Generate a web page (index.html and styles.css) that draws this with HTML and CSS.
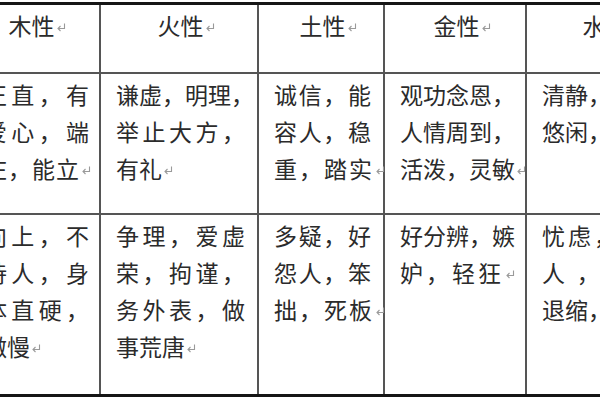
FILE: index.html
```html
<!DOCTYPE html>
<html lang="zh-CN">
<head>
<meta charset="utf-8">
<title>五行性格</title>
<link rel="stylesheet" href="styles.css">
</head>
<body>
<div class="page">
  <div class="tbl">
    <div class="c h c1">木性<svg class="pm" viewBox="0 0 10 10"><path d="M8.5 1.5V6.5H2M4.5 4L2 6.5L4.5 9"/></svg></div>
    <div class="c h">火性<svg class="pm" viewBox="0 0 10 10"><path d="M8.5 1.5V6.5H2M4.5 4L2 6.5L4.5 9"/></svg></div>
    <div class="c h">土性<svg class="pm" viewBox="0 0 10 10"><path d="M8.5 1.5V6.5H2M4.5 4L2 6.5L4.5 9"/></svg></div>
    <div class="c h">金性<svg class="pm" viewBox="0 0 10 10"><path d="M8.5 1.5V6.5H2M4.5 4L2 6.5L4.5 9"/></svg></div>
    <div class="c h">水性<svg class="pm" viewBox="0 0 10 10"><path d="M8.5 1.5V6.5H2M4.5 4L2 6.5L4.5 9"/></svg></div>

    <div class="c r1 c1">
      <div class="ln j">正直，有</div>
      <div class="ln j">爱心，端</div>
      <div class="ln ls1">庄，能立<svg class="pm" viewBox="0 0 10 10"><path d="M8.5 1.5V6.5H2M4.5 4L2 6.5L4.5 9"/></svg></div>
    </div>
    <div class="c r1">
      <div class="ln">谦虚，明理，</div>
      <div class="ln j">举止大方，</div>
      <div class="ln">有礼<svg class="pm" viewBox="0 0 10 10"><path d="M8.5 1.5V6.5H2M4.5 4L2 6.5L4.5 9"/></svg></div>
    </div>
    <div class="c r1">
      <div class="ln j">诚信，能</div>
      <div class="ln j">容人，稳</div>
      <div class="ln ls2">重，踏实<svg class="pm" viewBox="0 0 10 10"><path d="M8.5 1.5V6.5H2M4.5 4L2 6.5L4.5 9"/></svg></div>
    </div>
    <div class="c r1">
      <div class="ln">观功念恩，</div>
      <div class="ln">人情周到，</div>
      <div class="ln">活泼，灵敏<svg class="pm" viewBox="0 0 10 10"><path d="M8.5 1.5V6.5H2M4.5 4L2 6.5L4.5 9"/></svg></div>
    </div>
    <div class="c r1">
      <div class="ln">清静，聪明，</div>
      <div class="ln">悠闲，机智，</div>
    </div>

    <div class="c r2 c1">
      <div class="ln j">向上，不</div>
      <div class="ln j">待人，身</div>
      <div class="ln j">体直硬，</div>
      <div class="ln">傲慢<svg class="pm" viewBox="0 0 10 10"><path d="M8.5 1.5V6.5H2M4.5 4L2 6.5L4.5 9"/></svg></div>
    </div>
    <div class="c r2">
      <div class="ln j">争理，爱虚</div>
      <div class="ln j">荣，拘谨，</div>
      <div class="ln j">务外表，做</div>
      <div class="ln">事荒唐<svg class="pm" viewBox="0 0 10 10"><path d="M8.5 1.5V6.5H2M4.5 4L2 6.5L4.5 9"/></svg></div>
    </div>
    <div class="c r2">
      <div class="ln j">多疑，好</div>
      <div class="ln j">怨人，笨</div>
      <div class="ln ls2">拙，死板<svg class="pm" viewBox="0 0 10 10"><path d="M8.5 1.5V6.5H2M4.5 4L2 6.5L4.5 9"/></svg></div>
    </div>
    <div class="c r2">
      <div class="ln">好分辨，嫉</div>
      <div class="ln ls3">妒，轻狂<svg class="pm" viewBox="0 0 10 10"><path d="M8.5 1.5V6.5H2M4.5 4L2 6.5L4.5 9"/></svg></div>
    </div>
    <div class="c r2">
      <div class="ln j">忧虑，胆小</div>
      <div class="ln j">人，不安</div>
      <div class="ln">退缩，胆怯</div>
    </div>
  </div>
</div>
</body>
</html>
```

FILE: styles.css
```css
html, body {
  margin: 0;
  padding: 0;
  background: #ffffff;
  overflow: hidden;
}

.page {
  width: 600px;
  height: 400px;
  overflow: hidden;
}

.tbl {
  display: grid;
  grid-template-columns: 132px 158px 126px 142px 156px;
  grid-template-rows: 69px 141px 179px;
  width: 714px;
  margin: 2px 0 0 -31px;
  border-top: 3px solid #151515;
  border-bottom: 3px solid #151515;
  font-family: "Noto Sans CJK SC", "Noto Sans CJK TC", sans-serif;
  font-size: 23px;
  line-height: 37px;
  color: #2b2b2b;
}

.c {
  box-sizing: border-box;
  border-right: 2px solid #555555;
  padding: 2px 12px 0 15px;
  overflow: visible;
}

.h,
.r1 {
  border-bottom: 2px solid #555555;
}

.h {
  text-align: center;
}

.c1 {
  padding-right: 10px;
}

.h.c1 {
  padding-right: 20px;
}

.ln {
  white-space: nowrap;
}

.j {
  white-space: normal;
  text-align: justify;
  text-align-last: justify;
}

.ls1 { letter-spacing: 1px; }
.ls2 { letter-spacing: 2px; }
.ls3 { letter-spacing: 3px; }

.pm {
  width: 10px;
  height: 10px;
  vertical-align: 3px;
  margin-left: 1px;
  fill: none;
  stroke: #9a9a9a;
  stroke-width: 1.1;
}

.h .pm {
  margin-right: -11px;
}
```
